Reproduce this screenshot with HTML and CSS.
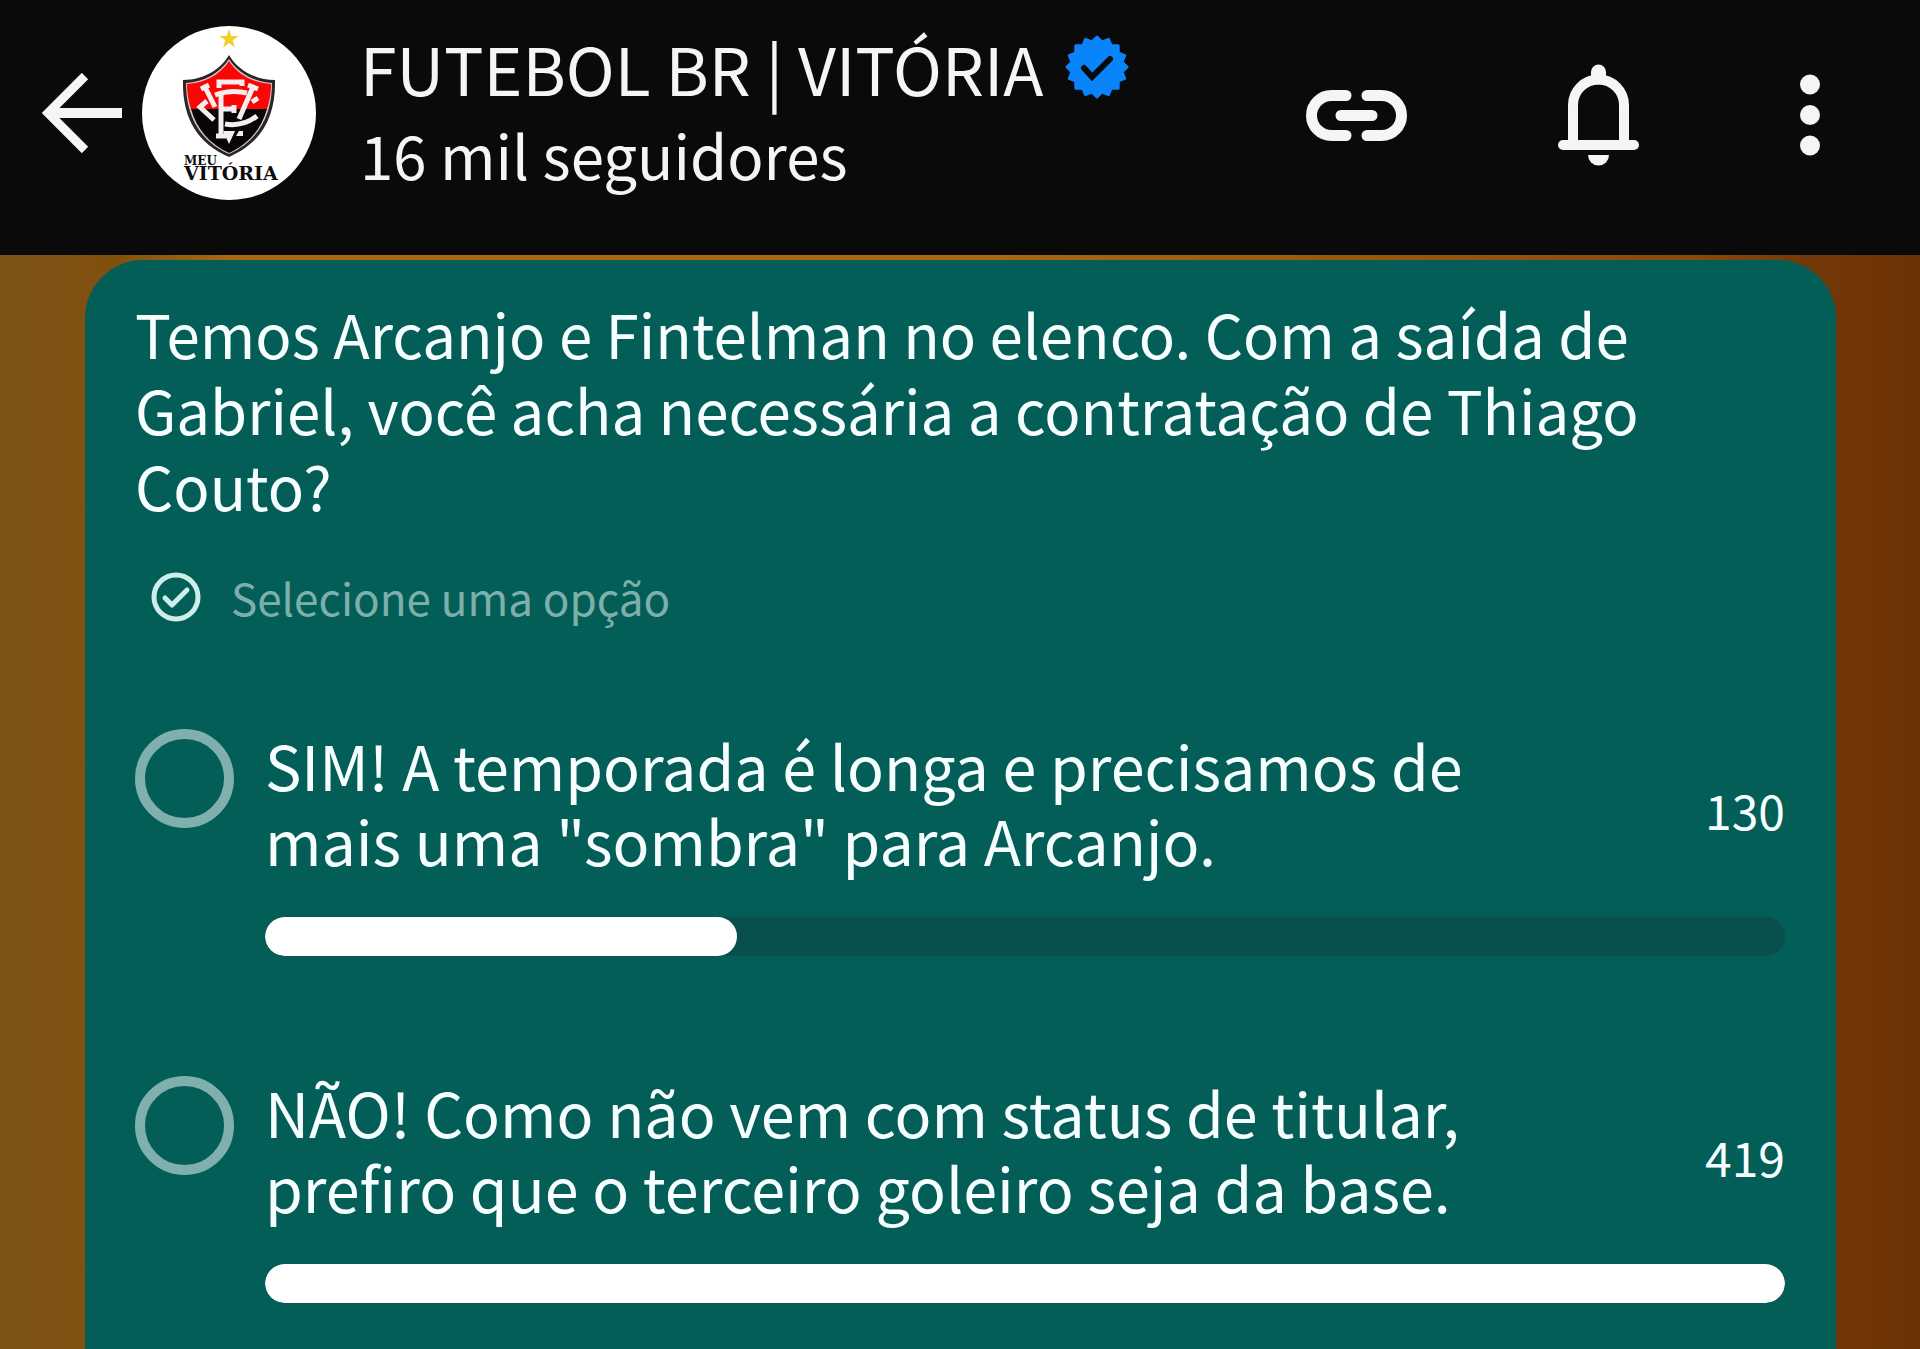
FILE: index.html
```html
<!DOCTYPE html>
<html lang="pt-BR">
<head>
<meta charset="utf-8">
<meta name="viewport" content="width=device-width, initial-scale=1">
<title>FUTEBOL BR | VITÓRIA</title>
<link rel="stylesheet" href="styles.css">
</head>
<body>
<header class="topbar">
  <button class="icon-button back" type="button" aria-label="Voltar">
    <svg width="80" height="80" viewBox="0 0 80 80" fill="none" stroke="currentColor" aria-hidden="true">
      <path d="M43 3 6 40 43 77" stroke-width="9"/>
      <path d="M8 40H80" stroke-width="10"/>
    </svg>
  </button>
  <svg class="avatar" width="174" height="174" viewBox="0 0 174 174" role="img" aria-label="Meu Vitória">
    <circle cx="87" cy="87" r="87" fill="#fff"/>
    <path fill="#f0cf2c" d="M87 3l2.300 7h7.200l-5.800 4.300 2.200 7.200-5.900-4.400-5.900 4.400 2.200-7.200-5.800-4.300h7.200z"/>
    <path fill="#2a2628" d="M87 29C79 43 62 54 41 54C40 90 54 117 87 131C120 117 134 90 133 54C112 54 95 43 87 29Z"/>
    <path fill="#d9c9c9" d="M87 33C78 47 62 56 44 57C44 90 58 115 87 128C116 115 130 90 130 57C112 56 96 47 87 33Z"/>
    <path fill="#fb0505" d="M87 35C78 49 62 57 45 58Q45 71 49 83H125Q129 71 129 58C112 57 96 49 87 35Z"/>
    <path fill="#070505" d="M49 83C55 104 68 118 87 127C106 118 119 104 125 83Z"/>
    <g fill="none" stroke="#f4eeee" stroke-width="5">
      <path d="M77 62V56H100V60M73 69Q89 63 105 67"/>
      <path d="M79 69V110M74 110H84M79 83H93M92 79V87"/>
      <path d="M63 61 73 81M59 63 67 59"/>
      <path d="M111 61 97 93M106 59 116 63"/>
      <path d="M65 75 58 81 72 94"/>
      <path d="M83 98Q101 101 115 90M110 76 116 72"/>
    </g>
    <path d="M81 105H93L87 118ZM94 110 97 105H101V110Z" fill="#f4eeee"/>
    <text class="crest-small" x="42" y="139">MEU</text>
    <text class="crest-large" x="42" y="154">VITÓRIA</text>
  </svg>
  <div class="channel">
    <h1 class="channel-name">FUTEBOL BR | VITÓRIA
      <svg class="verified" width="64" height="64" viewBox="0 0 64 64" role="img" aria-label="Verificado">
        <g fill="#0a84fb" stroke="#0a84fb" stroke-width="3" stroke-linejoin="round">
          <path d="M32 2 62 32 32 62 2 32Z"/>
          <path d="M32 2 62 32 32 62 2 32Z" transform="rotate(22.500 32 32)"/>
          <path d="M32 2 62 32 32 62 2 32Z" transform="rotate(45 32 32)"/>
          <path d="M32 2 62 32 32 62 2 32Z" transform="rotate(67.500 32 32)"/>
        </g>
        <path d="M19 33 27 42 45 24" fill="none" stroke="#0a0a0a" stroke-width="6" stroke-linecap="round"/>
      </svg>
    </h1>
    <p class="followers">16 mil seguidores</p>
  </div>
  <nav class="actions" aria-label="Ações do canal">
    <button class="icon-button" type="button" aria-label="Copiar link">
      <svg width="101" height="51" viewBox="0 0 101 51" fill="none" stroke="currentColor" stroke-width="11" stroke-linecap="round" aria-hidden="true">
        <path d="M40 5.500H25.500a20 20 0 0 0 0 40H40M61 5.500H75.500a20 20 0 0 1 0 40H61M35 25.500H66"/>
      </svg>
    </button>
    <button class="icon-button" type="button" aria-label="Notificações">
      <svg width="81" height="102" viewBox="0 0 81 102" fill="none" stroke="currentColor" stroke-width="10" stroke-linecap="round" aria-hidden="true">
        <path d="M15 81V41a25.500 25.500 0 0 1 51 0V81M5 81H76"/>
        <path d="M40.500 8V13" stroke-width="15"/>
        <path d="M30 91H51a10.500 10.500 0 0 1-21 0Z" fill="currentColor" stroke="none"/>
      </svg>
    </button>
    <button class="icon-button more" type="button" aria-label="Mais opções">
      <svg width="20" height="82" viewBox="0 0 20 82" fill="currentColor" aria-hidden="true">
        <circle cx="10" cy="10.500" r="10"/><circle cx="10" cy="41" r="10"/><circle cx="10" cy="71.500" r="10"/>
      </svg>
    </button>
  </nav>
</header>
<main class="chat">
  <form class="poll">
    <h2 class="question">Temos Arcanjo e Fintelman no elenco. Com a saída de<br>Gabriel, você acha necessária a contratação de Thiago<br>Couto?</h2>
    <p class="hint">
      <svg width="50" height="50" viewBox="0 0 50 50" fill="none" stroke="currentColor" stroke-width="5" aria-hidden="true">
        <circle cx="25" cy="25" r="22"/>
        <path d="M14 26 21 33 36 18" stroke-linecap="round" stroke-linejoin="round"/>
      </svg>
      <span class="hint-text">Selecione uma opção</span>
    </p>
    <div class="option">
      <input class="choice" type="radio" name="voto" id="sim">
      <label class="option-text" for="sim">SIM! A temporada é longa e precisamos de<br>mais uma "sombra" para Arcanjo.</label>
      <span class="count">130</span>
      <progress class="bar" value="130" max="419" aria-label="Votos em sim"></progress>
    </div>
    <div class="option">
      <input class="choice" type="radio" name="voto" id="nao">
      <label class="option-text" for="nao">NÃO! Como não vem com status de titular,<br>prefiro que o terceiro goleiro seja da base.</label>
      <span class="count">419</span>
      <progress class="bar" value="419" max="419" aria-label="Votos em não"></progress>
    </div>
  </form>
</main>
</body>
</html>
```
FILE: styles.css
```css
* {
  box-sizing: border-box;
}

body {
  margin: 0;
  min-height: 100vh;
  display: flex;
  flex-direction: column;
  background: #0a0a0a;
  color: #f7feff;
  font-family: "Noto Sans CJK SC", "Noto Sans", sans-serif;
}

h1,
h2,
p {
  margin: 0;
  font-weight: 400;
}

.topbar {
  display: flex;
  align-items: center;
  padding: 26px 100px 55px 42px;
  color: #f5f5f8;
}

.icon-button {
  display: flex;
  padding: 0;
  border: 0;
  background: none;
  color: inherit;
  cursor: pointer;
}

.avatar {
  flex: none;
  margin: 0 44px 0 20px;
}

.crest-small,
.crest-large {
  font-family: "DejaVu Serif", serif;
  font-weight: 700;
  fill: #0d0b0c;
}

.crest-small {
  font-size: 12px;
}

.crest-large {
  font-size: 19px;
}

.channel {
  flex: 1;
  display: flex;
  flex-direction: column;
  gap: 12px;
  padding-bottom: 10px;
}

.channel-name {
  display: flex;
  align-items: center;
  gap: 22px;
  font-size: 66px;
  line-height: 80px;
  white-space: nowrap;
}

.followers {
  font-size: 60px;
  line-height: 70px;
}

.actions {
  display: flex;
  align-items: center;
  gap: 151px;
  padding-top: 4px;
}

.more {
  margin-left: 10px;
}

.chat {
  flex: 1;
  display: flex;
  padding: 5px 84px 0 85px;
  background:
    linear-gradient(90deg, transparent 6%, #a8690f 12%, #a8690f 50%, #8a4a08 88%, transparent 94%) top / 100% 8px no-repeat,
    linear-gradient(90deg, #7c5417, #80500f 5%, #733808 95%, #6b3205);
}

.poll {
  flex: 1;
  padding: 35px 51px 46px 50px;
  border-radius: 58px 58px 0 0;
  background: #045e58;
}

.question {
  font-size: 60px;
  line-height: 76px;
}

.hint {
  display: flex;
  align-items: center;
  gap: 30px;
  margin: 44px 0 100px 16px;
  color: #cdeeea;
  font-size: 44px;
  line-height: 60px;
}

.hint-text {
  color: #7db0ab;
}

.option {
  display: grid;
  grid-template-columns: 99px 1fr auto;
  column-gap: 31px;
}

.option + .option {
  margin-top: 118px;
}

.choice {
  appearance: none;
  width: 99px;
  height: 99px;
  margin: 2px 0 0;
  border: 10px solid #80b0ad;
  border-radius: 50%;
}

.choice:checked {
  background: #80b0ad content-box;
  padding: 14px;
}

.option-text {
  font-size: 61px;
  line-height: 75px;
}

.count {
  align-self: center;
  padding-top: 14px;
  font-size: 48px;
  line-height: 60px;
}

.bar {
  appearance: none;
  grid-column: 2 / -1;
  width: 100%;
  height: 39px;
  margin-top: 40px;
  border: 0;
  border-radius: 20px;
  background: #08504b;
  overflow: hidden;
}

.bar::-webkit-progress-bar {
  border-radius: 20px;
  background: #08504b;
}

.bar::-webkit-progress-value {
  border-radius: 20px;
  background: #fff;
}
```
